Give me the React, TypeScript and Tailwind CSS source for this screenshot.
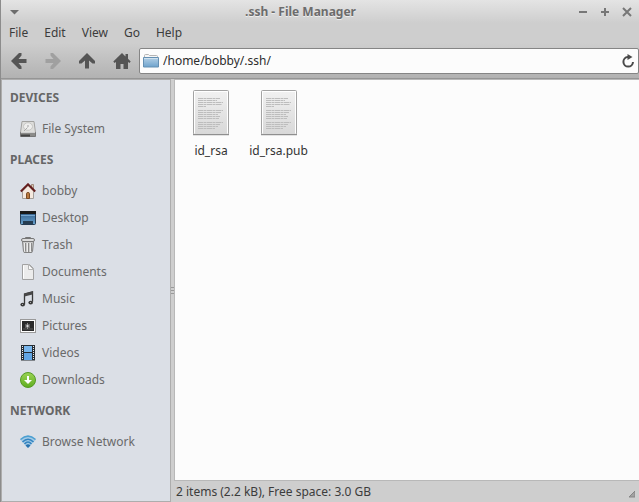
import type { ReactNode } from "react";

function ArrowIcon({ className }: { className: string }) {
  return (
    <svg className={className} width="16" height="16" viewBox="0 0 16 16" aria-hidden="true">
      <path d="M0 8 8 0H10.500V2.500L7.500 6H15.500V10H7.500L10.500 13.500V16H8Z" fill="currentColor" />
    </svg>
  );
}

function HomeIcon() {
  return (
    <svg width="18" height="16" viewBox="0 0 18 16" aria-hidden="true">
      <path d="M9 0 .3 8.500 1.500 10 3 9v7h4.500v-5h3v5H15V9l1.500 1 1.200-1.500L15 5.800V1h-2.500v2.400Z" fill="currentColor" />
    </svg>
  );
}

function FolderIcon() {
  return (
    <svg width="16" height="16" viewBox="0 0 16 16" aria-hidden="true">
      <defs>
        <linearGradient id="folder" x1="0" y1="0" x2="0" y2="1">
          <stop offset="0" stopColor="#b4d0e6" />
          <stop offset="1" stopColor="#6ea3cd" />
        </linearGradient>
      </defs>
      <path d="M1.500 8V2.500q0-1 1-1h3l1 1h7q1 0 1 1v4" fill="#f6f6f6" stroke="#b5b5b5" />
      <path d="M.5 4.500h15v9.500H.5Z" fill="url(#folder)" stroke="#6590b3" />
      <path d="M1 5.500h14" stroke="#cfe1ee" />
    </svg>
  );
}

function ReloadIcon() {
  return (
    <svg width="14" height="14" viewBox="0 0 14 14" aria-hidden="true">
      <path d="M8 3H6.800a4.800 4.800 0 1 0 5.200 5" fill="none" stroke="#4a4a4a" strokeWidth="2" />
      <path d="M6.500 0v6L11.500 3Z" fill="#4a4a4a" />
    </svg>
  );
}

function DriveIcon() {
  return (
    <svg width="16" height="16" viewBox="0 0 16 16" aria-hidden="true">
      <path d="M2 .5h12l1.500 11H.5Z" fill="#dededc" stroke="#a2a2a0" />
      <ellipse cx="8" cy="5.500" rx="4.500" ry="3.800" fill="#eeeeed" stroke="#c6c6c4" />
      <circle cx="8" cy="5" r="1" fill="#bbb" />
      <path d="m4 10 3.500-3.500" stroke="#aaa" />
      <path d="M.5 11.500h15v4H.5Z" fill="#8b8b89" stroke="#777" />
      <path d="M1 11.500h14" stroke="#d0d0d0" />
      <path d="M1 14.500h9" stroke="#444" strokeWidth="2" />
    </svg>
  );
}

function HouseIcon() {
  return (
    <svg width="16" height="16" viewBox="0 0 16 16" aria-hidden="true">
      <path d="M11.500 1.500h2V6h-2Z" fill="#d8c7b8" stroke="#a08b7c" />
      <path d="M2.500 8 8 2.500 13.500 8v7.500h-11Z" fill="#f5e9df" stroke="#a6a09b" />
      <path d="M6.500 10.500q0-1 1.500-1t1.500 1v5h-3Z" fill="#b9793f" stroke="#7d4c24" />
      <path d="M.8 8.500 8 1.300l7.200 7.200" fill="none" stroke="#641c1c" strokeWidth="2" />
    </svg>
  );
}

function DesktopIcon() {
  return (
    <svg width="16" height="16" viewBox="0 0 16 16" aria-hidden="true">
      <defs>
        <linearGradient id="desk" x1="0" y1="0" x2="0" y2="1">
          <stop offset="0" stopColor="#2c5885" />
          <stop offset="1" stopColor="#6aa3cf" />
        </linearGradient>
      </defs>
      <rect x=".5" y="1.500" width="15" height="13" rx="1" fill="url(#desk)" stroke="#253c53" />
      <path d="M0 1h16v3H0Z" fill="#191919" />
      <path d="M1 5.500h14" stroke="#77a6ce" />
      <path d="M3 11h10v3H3Z" fill="#263d52" />
    </svg>
  );
}

function TrashIcon() {
  return (
    <svg width="16" height="16" viewBox="0 0 16 16" aria-hidden="true">
      <path d="M2.500 4.500h11l-1 10q0 1-1.500 1H5q-1.500 0-1.500-1Z" fill="#c9c9c9" stroke="#828282" />
      <path d="M5.500 6v8.500M8.500 6v9M11.500 6v8.500" stroke="#8a8a8a" />
      <path d="M4.500 6v8.500M7.500 6v9M10.500 6v9" stroke="#ececec" />
      <path d="M5.500 2V.5h5V2" fill="none" stroke="#777" />
      <rect x="1.500" y="1.500" width="13" height="3" rx="1.500" fill="#dcdcdc" stroke="#777" />
    </svg>
  );
}

function DocumentIcon() {
  return (
    <svg width="16" height="16" viewBox="0 0 16 16" aria-hidden="true">
      <path d="M2.500.5h7l4 4v11h-11Z" fill="#ececec" stroke="#a2a2a2" />
      <path d="M3.500 14.500v-13" stroke="#fff" />
      <path d="M8.500.5v5h5Z" fill="#fafafa" stroke="#b5b5b5" />
    </svg>
  );
}

function MusicIcon() {
  return (
    <svg width="16" height="16" viewBox="0 0 16 16" aria-hidden="true">
      <path d="M4.500 13.500V3l8-2.200v10" fill="none" stroke="#393939" strokeWidth="1.300" />
      <path d="m4.500 2.500 8-2v3l-8 2Z" fill="#484848" />
      <ellipse cx="2.700" cy="13.600" rx="2.300" ry="1.900" fill="#393939" />
      <ellipse cx="10.700" cy="11.600" rx="2.300" ry="1.900" fill="#393939" />
      <path d="M2 13.500h1M10 11.500h1" stroke="#aaa" />
    </svg>
  );
}

function PictureIcon() {
  return (
    <svg width="16" height="16" viewBox="0 0 16 16" aria-hidden="true">
      <rect x=".5" y="1.500" width="15" height="13" fill="#fff" stroke="#999" />
      <path d="M2 3h12v10H2Z" fill="#2b2b2b" />
      <path d="M3 10h10v2H3Z" fill="#444" />
      <path d="M7.500 5v6M5 8h5M5.500 6l4 4M9.500 6l-4 4" stroke="#aaa" strokeWidth=".8" />
      <circle cx="7.500" cy="8" r="1" fill="#ddd" />
    </svg>
  );
}

function VideoIcon() {
  return (
    <svg width="16" height="16" viewBox="0 0 16 16" aria-hidden="true">
      <path d="M1 0h14v15.500H1Z" fill="#262d33" />
      <path d="M4 1h8v6H4Z" fill="#79b7ee" />
      <path d="M4 8h8v7H4Z" fill="#62a6e5" />
      <path d="M2.500 1v14M13.500 1v14" stroke="#eee" strokeDasharray="1 1" />
    </svg>
  );
}

function DownloadIcon() {
  return (
    <svg width="16" height="16" viewBox="0 0 16 16" aria-hidden="true">
      <defs>
        <linearGradient id="down" x1="0" y1="0" x2="0" y2="1">
          <stop offset="0" stopColor="#9bd455" />
          <stop offset="1" stopColor="#5fad20" />
        </linearGradient>
      </defs>
      <circle cx="8" cy="8" r="7.500" fill="url(#down)" stroke="#559a25" />
      <path d="M7 4h2v4h3l-4 4-4-4h3Z" fill="#fff" />
    </svg>
  );
}

function NetworkIcon() {
  return (
    <svg width="16" height="14" viewBox="0 0 16 14" aria-hidden="true">
      <path d="M0 4.500Q8-2.800 16 4.500L8 13Z" fill="#a5cbe6" />
      <g fill="none" stroke="#3484c0" strokeWidth="1.500">
        <path d="M.5 4.500Q8-2.200 15.500 4.500" stroke="#4b9fd1" />
        <path d="M2.500 7Q8 1.500 13.500 7" />
        <path d="M4.500 9Q8 5 11.500 9" />
      </g>
      <path d="M5.500 10.500Q8 8 10.500 10.500L8 13Z" fill="#2872ae" />
    </svg>
  );
}

function TextFileIcon() {
  const lines = [22, 19, 25, 24, 8, 0, 25, 23, 20, 22, 21, 0, 25, 22, 20, 17];
  return (
    <svg width="38" height="48" viewBox="0 0 38 48" aria-hidden="true">
      <defs>
        <linearGradient id="paper" x1="0" y1="0" x2="0" y2="1">
          <stop offset="0" stopColor="#f1f1f1" />
          <stop offset="1" stopColor="#d8d8d8" />
        </linearGradient>
      </defs>
      <path d="M1 46h36" stroke="#e2e2e2" strokeWidth="2" />
      <rect x="1.500" y="1.500" width="35" height="44" rx="1" fill="url(#paper)" stroke="#a3a3a3" />
      <path d="M2.500 44.500v-42h33v42" fill="none" stroke="#fff" />
      <path d="M1 45.500h36" stroke="#8f8f8f" />
      {lines.map((w, i) =>
        w ? <path key={i} d={`M6 ${9.5 + i * 2}h${w}`} stroke="#bdbdbd" strokeDasharray="5 .5 3 .5" /> : null,
      )}
    </svg>
  );
}

function SectionTitle({ children }: { children: ReactNode }) {
  return <h2 className="flex h-[35px] items-center pl-2 font-bold text-[#666]">{children}</h2>;
}

function Place({ icon, label }: { icon: ReactNode; label: string }) {
  return (
    <li>
      <a href="#" className="flex h-[27px] items-center gap-1.5 pl-[18px] text-[#6a6a6a]">
        {icon}
        {label}
      </a>
    </li>
  );
}

const places = [
  { label: "bobby", icon: <HouseIcon /> },
  { label: "Desktop", icon: <DesktopIcon /> },
  { label: "Trash", icon: <TrashIcon /> },
  { label: "Documents", icon: <DocumentIcon /> },
  { label: "Music", icon: <MusicIcon /> },
  { label: "Pictures", icon: <PictureIcon /> },
  { label: "Videos", icon: <VideoIcon /> },
  { label: "Downloads", icon: <DownloadIcon /> },
];

const menus = ["File", "Edit", "View", "Go", "Help"];

export default function App() {
  return (
    <div className="flex h-screen flex-col border-l border-[#8c8c8c] bg-[#cecece] font-['Noto_Sans',sans-serif] text-[12px] leading-4 text-[#3c3c3c]">
      <header className="flex h-[23px] shrink-0 items-center bg-linear-to-b from-[#e4e4e4] to-[#cecece] pr-px">
        <button aria-label="Window menu" className="w-7 pl-[9px]">
          <svg width="9" height="6" viewBox="0 0 9 6" aria-hidden="true">
            <path d="M0 1h9L4.500 5.500Z" fill="#6c6c6c" />
          </svg>
        </button>
        <h1 className="flex-1 text-center font-bold text-[#6c6c6c] [text-shadow:0_1px_0_#eee]">.ssh - File Manager</h1>
        <div className="flex text-[#777]">
          <button aria-label="Minimize" className="flex w-[22px] justify-center">
            <svg width="10" height="10" viewBox="0 0 10 10" aria-hidden="true">
              <path d="M1 5h8" stroke="currentColor" strokeWidth="2" />
            </svg>
          </button>
          <button aria-label="Maximize" className="flex w-[22px] justify-center">
            <svg width="10" height="10" viewBox="0 0 10 10" aria-hidden="true">
              <path d="M1 5h8M5 1v8" stroke="currentColor" strokeWidth="2" />
            </svg>
          </button>
          <button aria-label="Close" className="flex w-[22px] justify-center">
            <svg width="10" height="10" viewBox="0 0 10 10" aria-hidden="true">
              <path d="m1 1 8 8M9 1 1 9" stroke="currentColor" strokeWidth="2" />
            </svg>
          </button>
        </div>
      </header>

      <nav aria-label="Menu bar" className="flex h-5 shrink-0 items-center gap-4 pl-2">
        {menus.map((name) => (
          <button key={name}>{name}</button>
        ))}
      </nav>

      <div className="flex h-9 shrink-0 items-center border-b border-[#959595] bg-linear-to-b from-[#cecece] to-[#b2b2b2] text-[#555]">
        <button aria-label="Back" className="flex w-9 justify-center">
          <ArrowIcon className="" />
        </button>
        <button aria-label="Forward" className="flex w-8 justify-center text-[#a0a0a0]" disabled>
          <ArrowIcon className="rotate-180" />
        </button>
        <button aria-label="Up" className="flex w-9 justify-center">
          <ArrowIcon className="rotate-90" />
        </button>
        <button aria-label="Home" className="flex w-[34px] justify-center">
          <HomeIcon />
        </button>
        <div className="flex h-[26px] flex-1 items-center gap-1 rounded-xs border border-[#858585] bg-[#fcfcfc] px-[3px]">
          <FolderIcon />
          <input
            aria-label="Location"
            defaultValue="/home/bobby/.ssh/"
            className="h-5 min-w-0 flex-1 bg-transparent text-[#2c2c2c] outline-none"
          />
          <button aria-label="Reload">
            <ReloadIcon />
          </button>
        </div>
      </div>

      <div className="flex min-h-0 flex-1">
        <aside className="w-[170px] shrink-0 border border-[#adadad] bg-[#dbdfe6]">
          <SectionTitle>DEVICES</SectionTitle>
          <ul>
            <Place icon={<DriveIcon />} label="File System" />
          </ul>
          <SectionTitle>PLACES</SectionTitle>
          <ul>
            {places.map((p) => (
              <Place key={p.label} icon={p.icon} label={p.label} />
            ))}
          </ul>
          <SectionTitle>NETWORK</SectionTitle>
          <ul>
            <Place icon={<NetworkIcon />} label="Browse Network" />
          </ul>
        </aside>

        <div className="flex w-[3px] shrink-0 items-center">
          <div className="flex w-full flex-col gap-0.5">
            <div className="h-px bg-[#999]" />
            <div className="h-px bg-[#999]" />
            <div className="h-px bg-[#999]" />
          </div>
        </div>

        <div className="flex min-w-0 flex-1 flex-col">
          <main className="flex flex-1 items-start border border-r-0 border-[#b8b8b8] bg-[#fcfcfc] pt-[9px]">
            <button className="flex w-[72px] flex-col items-center gap-1.5 text-[#333]">
              <TextFileIcon />
              id_rsa
            </button>
            <button className="flex w-[63px] flex-col items-center gap-1.5 text-[#333]">
              <TextFileIcon />
              id_rsa.pub
            </button>
          </main>
          <footer className="flex h-[21px] shrink-0 items-center justify-between pr-1 pl-0.5">
            <p>2 items (2.2 kB), Free space: 3.0 GB</p>
            <svg className="self-end" width="7" height="11" viewBox="0 0 7 11" aria-hidden="true">
              <path d="M7 0v6H1Z" fill="#a2a2a2" stroke="#858585" />
            </svg>
          </footer>
        </div>
      </div>
    </div>
  );
}
